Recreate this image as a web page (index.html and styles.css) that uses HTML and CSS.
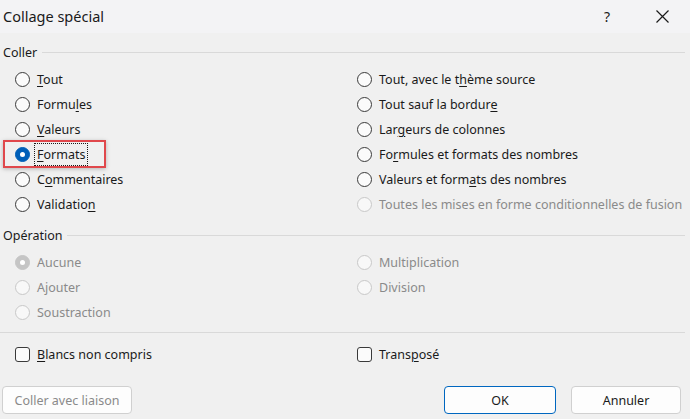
FILE: index.html
```html
<!DOCTYPE html>
<html lang="fr">
<head>
<meta charset="utf-8">
<title>Collage spécial</title>
<link rel="stylesheet" href="styles.css">
</head>
<body>
<div class="dialog">
  <div class="titlebar">
    <span class="title">Collage spécial</span>
    <span class="tb-help">?</span>
    <span class="tb-close">
      <svg width="13" height="13" viewBox="0 0 13 13"><path d="M0.5 0.5 L12.5 12.5 M12.5 0.5 L0.5 12.5" stroke="#1a1a1a" stroke-width="1.2" fill="none"/></svg>
    </span>
  </div>
  <div class="content">
    <div class="group-head"><span>Coller</span><div class="rule"></div></div>
    <div class="grid">
      <div class="col">
        <div class="opt"><span class="radio"></span><span class="lbl"><u>T</u>out</span></div>
        <div class="opt"><span class="radio"></span><span class="lbl">Formu<u>l</u>es</span></div>
        <div class="opt"><span class="radio"></span><span class="lbl"><u>V</u>aleurs</span></div>
        <div class="opt highlight"><span class="radio checked"></span><span class="lbl focus"><u>F</u>ormats</span></div>
        <div class="opt"><span class="radio"></span><span class="lbl">C<u>o</u>mmentaires</span></div>
        <div class="opt"><span class="radio"></span><span class="lbl">Validatio<u>n</u></span></div>
      </div>
      <div class="col">
        <div class="opt"><span class="radio"></span><span class="lbl">Tout, avec le t<u>h</u>ème source</span></div>
        <div class="opt"><span class="radio"></span><span class="lbl">Tout sauf la bordur<u>e</u></span></div>
        <div class="opt"><span class="radio"></span><span class="lbl">Lar<u>g</u>eurs de colonnes</span></div>
        <div class="opt"><span class="radio"></span><span class="lbl">Fo<u>r</u>mules et formats des nombres</span></div>
        <div class="opt"><span class="radio"></span><span class="lbl">Valeurs et form<u>a</u>ts des nombres</span></div>
        <div class="opt disabled"><span class="radio"></span><span class="lbl">Toutes les mises en forme conditionnelles de fusion</span></div>
      </div>
    </div>
    <div class="group-head op"><span>Opération</span><div class="rule"></div></div>
    <div class="grid">
      <div class="col">
        <div class="opt disabled"><span class="radio checked"></span><span class="lbl">Aucune</span></div>
        <div class="opt disabled"><span class="radio"></span><span class="lbl">Ajouter</span></div>
        <div class="opt disabled"><span class="radio"></span><span class="lbl">Soustraction</span></div>
      </div>
      <div class="col">
        <div class="opt disabled"><span class="radio"></span><span class="lbl">Multiplication</span></div>
        <div class="opt disabled"><span class="radio"></span><span class="lbl">Division</span></div>
      </div>
    </div>
    <div class="sep"></div>
    <div class="grid checks">
      <div class="col">
        <div class="opt"><span class="check"></span><span class="lbl"><u>B</u>lancs non compris</span></div>
      </div>
      <div class="col">
        <div class="opt"><span class="check"></span><span class="lbl">Trans<u>p</u>osé</span></div>
      </div>
    </div>
    <div class="buttons">
      <button class="btn link" type="button">Coller avec liaison</button>
      <div class="spacer"></div>
      <button class="btn ok" type="button">OK</button>
      <button class="btn cancel" type="button">Annuler</button>
    </div>
  </div>
</div>
</body>
</html>
```

FILE: styles.css
```css
html, body {
  margin: 0;
  padding: 0;
  width: 690px;
  height: 419px;
  overflow: hidden;
  background: #f0f0f0;
}
body {
  font-family: "Noto Sans", "Open Sans", "Liberation Sans", sans-serif;
  font-size: 12.5px;
  color: #1a1a1a;
}
.dialog {
  width: 690px;
  height: 419px;
  display: flex;
  flex-direction: column;
}
.titlebar {
  height: 33px;
  background: #f3f3f5;
  display: flex;
  align-items: center;
  padding-left: 3px;
}
.title {
  font-size: 14.5px;
  flex: 1;
  color: #1a1a1a;
  margin-top: -1px;
}
.tb-help {
  width: 20px;
  font-size: 14px;
  margin-right: 39px;
  text-align: center;
  color: #1a1a1a;
}
.tb-close {
  width: 13px;
  height: 13px;
  margin-right: 21px;
  display: flex;
}
.content {
  flex: 1;
  display: flex;
  flex-direction: column;
}
.group-head {
  height: 20px;
  margin-top: 9px;
  margin-bottom: 5px;
  display: flex;
  align-items: center;
  padding-left: 3px;
  padding-right: 5px;
}
.group-head.op {
  margin-top: 8px;
}
.group-head span {
  margin-right: 5px;
}
.rule {
  flex: 1;
  height: 1px;
  background: #d9d9d9;
}
.grid {
  display: grid;
  grid-template-columns: 342px 1fr;
  padding-left: 15px;
}
.opt {
  height: 25px;
  display: flex;
  align-items: center;
  position: relative;
}
.radio {
  width: 13px;
  height: 13px;
  border: 1px solid #3a3a3a;
  border-radius: 50%;
  background: #fbfbfb;
  margin-right: 6px;
  flex: none;
  position: relative;
}
.radio.checked {
  background: #005fb8;
  border-color: #005fb8;
}
.radio.checked::after {
  content: "";
  position: absolute;
  left: 4px;
  top: 4px;
  width: 5px;
  height: 5px;
  border-radius: 50%;
  background: #fff;
}
.disabled .radio {
  border-color: #c8c8c8;
  background: #f8f8f8;
}
.disabled .radio.checked {
  background: #c5c5c5;
  border-color: #c5c5c5;
}
.disabled .lbl {
  color: #8a8a8a;
}
.lbl {
  white-space: nowrap;
  padding: 1px 1px;
}
.lbl u {
  text-decoration-thickness: 1px;
  text-underline-offset: 2px;
}
.focus {
  outline: 1px dotted #1a1a1a;
  outline-offset: 1px;
}
.highlight::before {
  content: "";
  position: absolute;
  left: -12px;
  top: -2px;
  width: 99px;
  height: 24px;
  border: 2px solid #e0484c;
  box-shadow: 0 1px 4px rgba(0,0,0,0.25);
  pointer-events: none;
}
.sep {
  height: 1px;
  background: #d9d9d9;
  margin: 7px 5px 0 0;
}
.checks {
  margin-top: 9px;
}
.check {
  width: 13px;
  height: 13px;
  border: 1px solid #3a3a3a;
  border-radius: 3px;
  background: #fbfbfb;
  margin-right: 6px;
  flex: none;
}
.buttons {
  display: flex;
  margin-top: 19px;
  padding-left: 2px;
  padding-right: 9px;
}
.spacer {
  flex: 1;
}
.btn {
  height: 28px;
  border: 1px solid #d0d0d0;
  border-radius: 4px;
  background: #fdfdfd;
  font-family: inherit;
  font-size: 12.5px;
  color: #1a1a1a;
  padding: 0;
}
.btn.link {
  width: 130px;
  color: #8a8a8a;
}
.btn.ok {
  width: 112px;
  border-color: #0067c0;
  margin-right: 15px;
}
.btn.cancel {
  width: 110px;
}
```
